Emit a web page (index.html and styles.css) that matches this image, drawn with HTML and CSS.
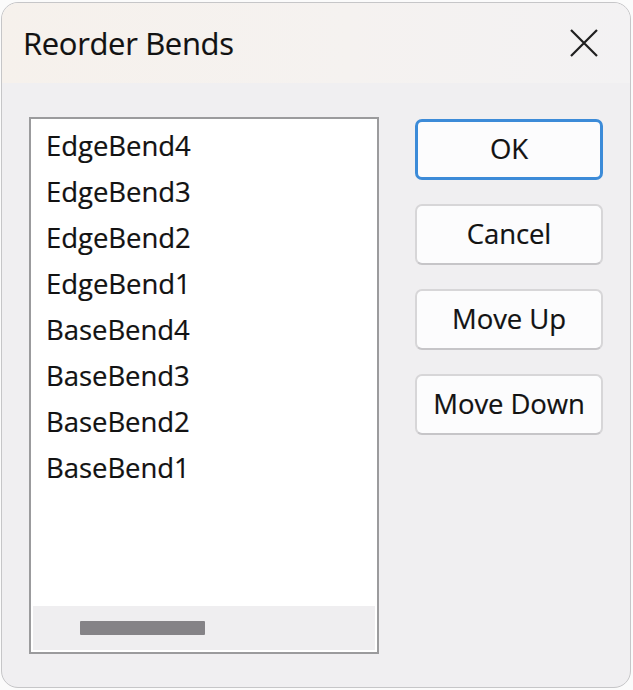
FILE: index.html
```html
<!DOCTYPE html>
<html lang="en">
<head>
<meta charset="utf-8">
<title>Reorder Bends</title>
<link rel="stylesheet" href="styles.css">
</head>
<body>
<div class="window">
  <div class="titlebar">
    <span class="title">Reorder Bends</span>
    <span class="close" aria-label="Close">
      <svg width="28" height="28" viewBox="0 0 28 28"><path d="M1 1 L27 27 M27 1 L1 27" stroke="#1f1f1f" stroke-width="2.2" fill="none"/></svg>
    </span>
  </div>
  <div class="content">
    <div class="listbox">
      <ul class="items">
        <li>EdgeBend4</li>
        <li>EdgeBend3</li>
        <li>EdgeBend2</li>
        <li>EdgeBend1</li>
        <li>BaseBend4</li>
        <li>BaseBend3</li>
        <li>BaseBend2</li>
        <li>BaseBend1</li>
      </ul>
      <div class="hscroll"><div class="thumb"></div></div>
    </div>
    <div class="buttons">
      <button class="btn default">OK</button>
      <button class="btn">Cancel</button>
      <button class="btn">Move Up</button>
      <button class="btn">Move Down</button>
    </div>
  </div>
</div>
</body>
</html>
```

FILE: styles.css
```css
html, body {
  margin: 0;
  padding: 0;
  background: #fbfbfb;
}
body {
  width: 633px;
  height: 690px;
  padding: 2px 2px 0 1px;
  box-sizing: border-box;
  font-family: "Open Sans", "Noto Sans", sans-serif;
  color: #121212;
}
.window {
  width: 630px;
  height: 686px;
  box-sizing: border-box;
  border: 1px solid #c6c6c8;
  border-radius: 17px;
  overflow: hidden;
  background: #f0eff1;
  display: flex;
  flex-direction: column;
}
.titlebar {
  height: 80px;
  flex: none;
  display: flex;
  align-items: center;
  justify-content: space-between;
  padding: 0 32px 0 21px;
  background: linear-gradient(90deg, #f6f1ec 0%, #f5f2f0 55%, #f3f2f3 100%);
}
.title {
  font-size: 31px;
  letter-spacing: -0.35px;
  margin-top: 0;
  -webkit-text-stroke: 0.15px #121212;
}
.close {
  display: flex;
  width: 28px;
  height: 28px;
  margin-top: 0;
}
.content {
  flex: 1;
  display: flex;
  align-items: flex-start;
  padding: 34px 0 0 27px;
  gap: 36px;
}
.listbox {
  width: 350px;
  height: 537px;
  box-sizing: border-box;
  border: 2px solid #9b9b9d;
  background: #ffffff;
  display: flex;
  flex-direction: column;
}
.items {
  list-style: none;
  margin: 0;
  padding: 4px 0 0 15px;
  flex: 1;
  font-size: 27.5px;
  line-height: 46px;
  letter-spacing: -0.05px;
  -webkit-text-stroke: 0.2px #121212;
}
.hscroll {
  height: 44px;
  margin: 0 2px 2px 2px;
  background: #efeef0;
  position: relative;
  flex: none;
}
.thumb {
  position: absolute;
  left: 47px;
  top: 15px;
  width: 125px;
  height: 14px;
  background: #858387;
  border-radius: 1px;
}
.buttons {
  width: 188px;
  display: flex;
  flex-direction: column;
  gap: 24px;
  margin-top: 2px;
}
.btn {
  height: 61px;
  box-sizing: border-box;
  border: 2px solid #d7d6d8;
  border-bottom-color: #c6c5c8;
  border-radius: 7px;
  background: #fcfcfd;
  font-family: "Open Sans", "Noto Sans", sans-serif;
  font-size: 27.5px;
  color: #121212;
  padding: 0 0 2px 0;
  letter-spacing: -0.1px;
  -webkit-text-stroke: 0.2px #121212;
}
.btn.default {
  border: 3px solid #3c8bd8;
}
```
